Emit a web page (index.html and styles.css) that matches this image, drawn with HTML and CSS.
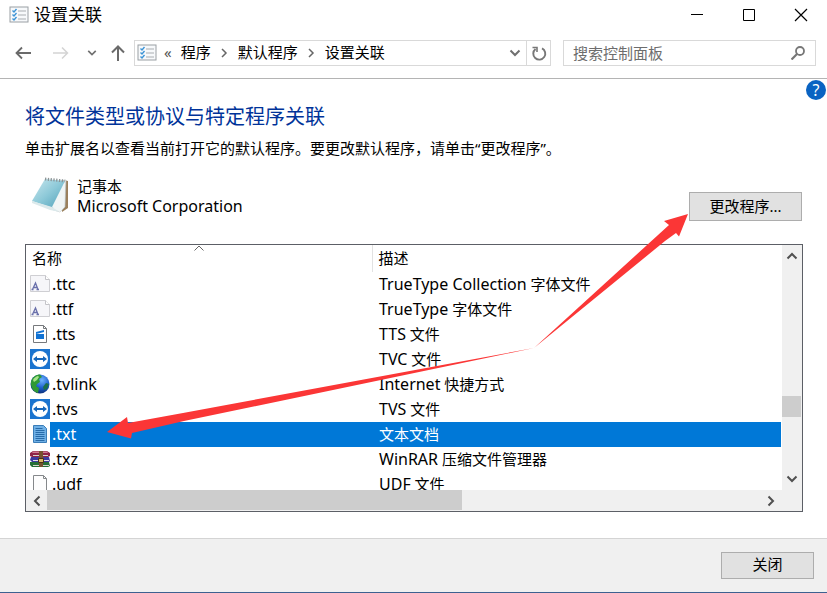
FILE: index.html
```
<!DOCTYPE html>
<html lang="zh-CN">
<head>
<meta charset="utf-8">
<title>设置关联</title>
<link rel="stylesheet" href="styles.css">
</head>
<body>
<svg class="defs" aria-hidden="true">
  <symbol id="i-panel" viewBox="0 0 20 18">
    <rect x="1" y="1" width="18" height="15" fill="#f7f9fb" stroke="#9a9fa4"/>
    <path d="M3.500 4.500l1.500 1.500 2.500-3M3.500 8.500l1.500 1.500 2.500-3M3.500 12.500l1.500 1.500 2.500-3" fill="none" stroke="#3d94d6" stroke-width="1.400"/>
    <path d="M9 5h8M9 9h8M9 13h8" stroke="#a9adb1"/>
  </symbol>
  <symbol id="i-font" viewBox="0 0 20 18">
    <path d="M.5 .5h15l4 4v12H.5z" fill="#f6f6f9" stroke="#cfcfd3"/>
    <path d="M15.500 .5v4h4" fill="#fff" stroke="#c4c4c8"/>
    <path d="M2.500 14.500L5.500 8l2.500 6.500M3.500 12.500h4M1.500 14.500h2M6.500 14.500h2.500" fill="none" stroke="#6a70ab" stroke-width="1.300"/>
  </symbol>
  <symbol id="i-tts" viewBox="0 0 20 20">
    <path d="M3.500 1.500h10l3 3v14h-13z" fill="#fff" stroke="#76797c"/>
    <path d="M13.500 1.500v3h3" fill="none" stroke="#76797c"/>
    <path d="M6 8l8-2v2l-8 2zM6 10h8v5H6z" fill="#1173d4"/>
  </symbol>
  <symbol id="i-tv" viewBox="0 0 20 20">
    <rect width="20" height="20" fill="#1b74cf"/>
    <circle cx="10" cy="10" r="8" fill="#fff"/>
    <path d="M3 10l4-3v2h6V7l4 3-4 3v-2H7v2z" fill="#1767bb"/>
  </symbol>
  <symbol id="i-globe" viewBox="0 0 20 20">
    <radialGradient id="g-sea" cx=".6" cy=".3" r=".8"><stop offset="0" stop-color="#6fb4ff"/><stop offset=".5" stop-color="#1d5fcc"/><stop offset="1" stop-color="#06205f"/></radialGradient>
    <circle cx="10" cy="10" r="9.500" fill="url(#g-sea)"/>
    <path d="M1 8C2 3 6 .5 10 .5L12 3 9 5l1 3-3 2-1 2 3 2-1 5C4 18 .5 14 1 8z" fill="#2f9a35"/>
    <path d="M3 6c1-2 3-3.500 5-4l1 1-2 3-3 2z" fill="#a6e58a"/>
    <path d="M16 9l3 1-2 5-3 1-1-3z" fill="#1c6f4a"/>
  </symbol>
  <symbol id="i-txt" viewBox="0 0 20 20">
    <path d="M3.500 1.500h10l3 3v14h-13z" fill="#6fb0e6" stroke="#3a7db8"/>
    <path d="M5.500 4.500h7M5.500 6.500h9M5.500 8.500h9M5.500 10.500h9M5.500 12.500h9M5.500 14.500h9M5.500 16.500h9" stroke="#276ba9"/>
  </symbol>
  <symbol id="i-rar" viewBox="0 0 20 18">
    <path d="M0 3l3-2h14l3 2v3l-2 1H2L0 6z" fill="#8e2347"/>
    <path d="M3 1.500h14l1 1.500H2z" fill="#d17c93"/>
    <path d="M1 7h18l1 4-1 1H2l-2-2z" fill="#3b3aa0"/>
    <path d="M3 10h16v1H3z" fill="#e7e2e9"/>
    <path d="M0 12h19l1 4-2 1H2l-2-2z" fill="#246f36"/>
    <path d="M3 15h16v1H3zM3 5h15v1H3z" fill="#d6d3cc"/>
    <path d="M9 1h4v16H9z" fill="#74512d"/>
    <path d="M8.500 8.500h5v4h-5z" fill="#d8b460" stroke="#4a3018"/>
  </symbol>
  <symbol id="i-file" viewBox="0 0 20 20">
    <path d="M3.500 1.500h10l3 3v14h-13z" fill="#fdfdfd" stroke="#85888b"/>
    <path d="M13.500 1.500v3h3" fill="none" stroke="#85888b"/>
  </symbol>
  <symbol id="i-down" viewBox="0 0 12 12"><path d="M1.500 3.500L6 8l4.500-4.500" fill="none" stroke="currentColor" stroke-width="2"/></symbol>
  <symbol id="i-right" viewBox="0 0 12 12"><path d="M4 2l4 4-4 4" fill="none" stroke="currentColor" stroke-width="1.500"/></symbol>
</svg>

<header class="titlebar">
  <svg class="panel-icon"><use href="#i-panel"/></svg>
  <h1>设置关联</h1>
  <div class="window-buttons">
    <button type="button" aria-label="最小化"><svg viewBox="0 0 14 14"><path d="M1 6.500h12" stroke="#000"/></svg></button>
    <button type="button" aria-label="最大化"><svg viewBox="0 0 14 14"><path d="M1.500 1.500h11v11h-11z" fill="none" stroke="#000"/></svg></button>
    <button type="button" aria-label="关闭窗口"><svg viewBox="0 0 14 14"><path d="M1 1l12 12M13 1L1 13" stroke="#000" stroke-width="1.200"/></svg></button>
  </div>
</header>

<nav class="navbar">
  <div class="history">
    <button type="button" aria-label="后退"><svg viewBox="0 0 16 16"><path d="M16 8H1.500M7 2.500L1.500 8 7 13.500" fill="none" stroke="#6a6a6a" stroke-width="1.800"/></svg></button>
    <button type="button" aria-label="前进" disabled><svg viewBox="0 0 16 16"><path d="M0 8h14.500M9 2.500L14.500 8 9 13.500" fill="none" stroke="#d4d4d4" stroke-width="1.500"/></svg></button>
    <button type="button" class="recent" aria-label="最近位置"><svg><use href="#i-down"/></svg></button>
    <button type="button" aria-label="向上"><svg viewBox="0 0 16 16"><path d="M8 16V1.500M2 7.500l6-6 6 6" fill="none" stroke="#6a6a6a" stroke-width="2"/></svg></button>
  </div>
  <div class="address">
    <svg class="panel-icon"><use href="#i-panel"/></svg>
    <span class="overflow">«</span>
    <a href="#">程序</a>
    <svg class="sep"><use href="#i-right"/></svg>
    <a href="#">默认程序</a>
    <svg class="sep"><use href="#i-right"/></svg>
    <a href="#">设置关联</a>
    <button type="button" class="drop" aria-label="展开地址"><svg><use href="#i-down"/></svg></button>
    <button type="button" class="refresh" aria-label="刷新"><svg viewBox="0 0 16 16"><path d="M4.500 4A6 6 0 1 0 11 3.300" fill="none" stroke="#777" stroke-width="1.900"/><path d="M1.500 2.500h4.500v4.500" fill="none" stroke="#777" stroke-width="1.600"/></svg></button>
  </div>
  <div class="search">
    <input type="text" placeholder="搜索控制面板" aria-label="搜索控制面板">
    <svg viewBox="0 0 14 14"><circle cx="9" cy="5" r="4" fill="none" stroke="#777" stroke-width="1.800"/><path d="M6 8l-5.500 5.500" stroke="#777" stroke-width="2.200"/></svg>
  </div>
</nav>

<main>
  <button type="button" class="help" aria-label="帮助">?</button>
  <h2>将文件类型或协议与特定程序关联</h2>
  <p class="hint">单击扩展名以查看当前打开它的默认程序。要更改默认程序，请单击“更改程序”。</p>

  <section class="program">
    <svg class="notepad" viewBox="0 0 40 38">
      <defs><linearGradient id="g-pad" x1="0" y1="0" x2="1" y2="1"><stop offset="0" stop-color="#c9e7ee"/><stop offset=".5" stop-color="#8dc9d8"/><stop offset="1" stop-color="#4d9fb8"/></linearGradient></defs>
      <path d="M33 4l5 1v27l-6 4z" fill="#9a805c"/>
      <path d="M30 5l6-1-1 27-5 5-9-3z" fill="#e9eff0" stroke="#b4bcbd" stroke-width=".6"/>
      <path d="M15 3l20 2-8 23-4 4L2 25z" fill="url(#g-pad)"/>
      <path d="M2 25l20 6 8 5-10-2L2 27z" fill="#dbe9eb"/>
      <path d="M35 5L22 31l8 5 4-5z" fill="#f0f5f5"/>
      <path d="M15 3l20 2" stroke="#8b9395" stroke-width="3" stroke-dasharray="1.300 1.500"/>
    </svg>
    <div class="program-name">
      <div>记事本</div>
      <div class="latin">Microsoft Corporation</div>
    </div>
    <button type="button" class="btn change">更改程序...</button>
  </section>

  <section class="list">
    <div class="viewport">
      <table>
        <colgroup><col class="c-icon"><col class="c-name"><col></colgroup>
        <thead>
          <tr>
            <th colspan="2">名称<svg class="sort" viewBox="0 0 10 6"><path d="M.5 5.500L5 1l4.500 4.500" fill="none" stroke="#666"/></svg></th>
            <th>描述</th>
          </tr>
        </thead>
        <tbody>
          <tr><td><svg><use href="#i-font"/></svg></td><td class="latin">.ttc</td><td><span class="latin">TrueType Collection</span> 字体文件</td></tr>
          <tr><td><svg><use href="#i-font"/></svg></td><td class="latin">.ttf</td><td><span class="latin">TrueType</span> 字体文件</td></tr>
          <tr><td><svg><use href="#i-tts"/></svg></td><td class="latin">.tts</td><td><span class="latin">TTS</span> 文件</td></tr>
          <tr><td><svg><use href="#i-tv"/></svg></td><td class="latin">.tvc</td><td><span class="latin">TVC</span> 文件</td></tr>
          <tr><td><svg><use href="#i-globe"/></svg></td><td class="latin">.tvlink</td><td><span class="latin">Internet</span> 快捷方式</td></tr>
          <tr><td><svg><use href="#i-tv"/></svg></td><td class="latin">.tvs</td><td><span class="latin">TVS</span> 文件</td></tr>
          <tr class="selected"><td><svg><use href="#i-txt"/></svg></td><td class="latin">.txt</td><td>文本文档</td></tr>
          <tr><td><svg><use href="#i-rar"/></svg></td><td class="latin">.txz</td><td><span class="latin">WinRAR</span> 压缩文件管理器</td></tr>
          <tr><td><svg><use href="#i-file"/></svg></td><td class="latin">.udf</td><td><span class="latin">UDF</span> 文件</td></tr>
        </tbody>
      </table>
    </div>
    <div class="vscroll">
      <button type="button" class="up" aria-label="向上滚动"><svg><use href="#i-down"/></svg></button>
      <div class="thumb"></div>
      <button type="button" class="down" aria-label="向下滚动"><svg><use href="#i-down"/></svg></button>
    </div>
    <div class="hscroll">
      <button type="button" class="left" aria-label="向左滚动"><svg><use href="#i-down"/></svg></button>
      <div class="thumb"></div>
      <button type="button" class="right" aria-label="向右滚动"><svg><use href="#i-down"/></svg></button>
    </div>
  </section>

  <svg class="arrows" viewBox="0 0 590 230" aria-hidden="true">
    <path d="M434 138L83 203 28 213l-1-6-20 15 24 6.500 1-5.500 52-12z" fill="#fb3636"/>
    <path d="M434 138L569 15l-5-4 24-7-9 22.500-3-3.500-11 8z" fill="#fb3636"/>
  </svg>
</main>

<footer>
  <button type="button" class="btn close">关闭</button>
</footer>
</body>
</html>
```

FILE: styles.css
```
* {
  box-sizing: border-box;
}

body {
  margin: 0;
  height: 100vh;
  display: flex;
  flex-direction: column;
  overflow: hidden;
  background: #fff;
  color: #000;
  font: 15px/20px "Noto Sans", "Noto Sans CJK SC", sans-serif;
}

button {
  display: flex;
  align-items: center;
  justify-content: center;
  margin: 0;
  padding: 0;
  border: 0;
  background: none;
  font: inherit;
  color: inherit;
}

.latin {
  font-size: 16px;
}

.defs {
  position: absolute;
  width: 0;
  height: 0;
}

.panel-icon {
  width: 20px;
  height: 18px;
  flex: none;
}

.titlebar {
  display: flex;
  align-items: center;
  height: 30px;
  padding-left: 9px;
}

.titlebar h1 {
  margin: 0 0 0 5px;
  font-size: 17px;
  font-weight: 400;
}

.window-buttons {
  display: flex;
  margin-left: auto;
}

.window-buttons button {
  width: 52px;
  height: 30px;
}

.window-buttons svg {
  width: 14px;
  height: 14px;
}

.navbar {
  display: flex;
  align-items: center;
  height: 49px;
  padding: 0 11px 2px 15px;
  border-bottom: 1px solid #b4b4b4;
}

.history {
  display: flex;
  align-items: center;
  gap: 22px;
  margin-right: 8px;
}

.history svg {
  width: 16px;
  height: 16px;
}

.history .recent {
  margin: 0 -9px 0 -4px;
  color: #707070;
}

.history .recent svg {
  width: 10px;
  height: 10px;
}

.address {
  display: flex;
  align-items: center;
  flex: 1;
  height: 26px;
  padding-left: 2px;
  border: 1px solid #d9d9d9;
}

.address a {
  padding-bottom: 2px;
  color: inherit;
  text-decoration: none;
}

.overflow {
  margin: 0 9px 0 7px;
  padding-bottom: 2px;
  color: #555;
}

.sep {
  width: 12px;
  height: 12px;
  margin: 0 8px 0 7px;
  color: #666;
}

.drop {
  width: 23px;
  height: 24px;
  margin-left: auto;
  color: #707070;
}

.drop svg {
  width: 12px;
  height: 12px;
}

.refresh {
  width: 24px;
  height: 24px;
  border-left: 1px solid #d9d9d9;
}

.refresh svg {
  width: 16px;
  height: 16px;
}

.search {
  display: flex;
  align-items: center;
  width: 253px;
  height: 26px;
  margin-left: 12px;
  padding: 0 10px 0 9px;
  border: 1px solid #d9d9d9;
}

.search input {
  flex: 1;
  min-width: 0;
  padding: 0;
  border: 0;
  outline: 0;
  background: none;
  font: inherit;
}

.search input::placeholder {
  color: #6d6d6d;
  opacity: 1;
}

.search svg {
  width: 14px;
  height: 14px;
}

main {
  position: relative;
  flex: 1;
  min-height: 0;
  display: flex;
  flex-direction: column;
  padding: 25px 24px 26px 25px;
}

.help {
  position: absolute;
  top: 1px;
  right: 1px;
  width: 20px;
  height: 20px;
  border-radius: 50%;
  background: #0a63c2;
  color: #fff;
  font-size: 16px;
}

h2 {
  margin: 0 0 8px;
  color: #039;
  font-size: 20px;
  line-height: 26px;
  font-weight: 400;
}

.hint {
  margin: 0 0 18px;
}

.program {
  display: flex;
  align-items: flex-start;
  margin-bottom: 23px;
}

.notepad {
  width: 40px;
  height: 38px;
  margin: 0 7px 0 5px;
}

.btn {
  padding-bottom: 2px;
  border: 1px solid #adadad;
  background: #e1e1e1;
}

.change {
  width: 113px;
  height: 29px;
  margin: 16px 1px 0 auto;
}

.list {
  flex: 1;
  min-height: 0;
  display: grid;
  grid-template: minmax(0, 1fr) 21px / minmax(0, 1fr) 20px;
  border: 1px solid #5c5f66;
  background: #fff;
}

.viewport {
  overflow: hidden;
  padding-right: 1px;
}

table {
  width: 100%;
  table-layout: fixed;
  border-collapse: collapse;
}

.c-icon {
  width: 24px;
}

.c-name {
  width: 322px;
}

th {
  position: relative;
  height: 27px;
  padding: 0 6px 2px;
  font-weight: 400;
  text-align: left;
}

th + th {
  border-left: 1px solid #e2e2e2;
}

.sort {
  position: absolute;
  top: 0;
  left: 50%;
  width: 10px;
  height: 6px;
  margin-left: -5px;
}

td {
  height: 25px;
  padding: 0 0 2px 2px;
  white-space: nowrap;
}

td:first-child {
  padding-left: 4px;
}

td:last-child {
  padding-left: 7px;
}

td svg {
  display: block;
  width: 20px;
  height: 20px;
}

.selected td + td {
  background: #0078d7;
  color: #fff;
}

.vscroll {
  display: grid;
  grid-template-rows: 22px 129fr 21px 51fr 22px;
  padding-right: 1px;
  background: #f0f0f0;
  color: #505050;
}

.vscroll .thumb {
  grid-row: 3;
  background: #cdcdcd;
}

.vscroll .down {
  grid-row: 5;
}

.hscroll {
  grid-column: 1 / -1;
  display: grid;
  grid-template-columns: 21px 415fr 298fr 21px 21px;
  background: #f0f0f0;
  color: #505050;
}

.hscroll .thumb {
  margin-bottom: 1px;
  background: #cdcdcd;
}

.hscroll .right {
  grid-column: 4;
}

.vscroll svg,
.hscroll svg {
  width: 12px;
  height: 12px;
}

.up svg {
  transform: rotate(180deg);
}

.left svg {
  transform: rotate(90deg);
}

.right svg {
  transform: rotate(-90deg);
}

.arrows {
  position: absolute;
  top: 131px;
  left: 100px;
  width: 590px;
  height: 230px;
  pointer-events: none;
}

footer {
  display: flex;
  justify-content: flex-end;
  align-items: center;
  height: 55px;
  padding: 0 13px 1px 0;
  border-top: 1px solid #d4d4d4;
  border-bottom: 1px solid #3d6190;
  background: #f0f0f0;
}

.close {
  width: 93px;
  height: 27px;
}
```
